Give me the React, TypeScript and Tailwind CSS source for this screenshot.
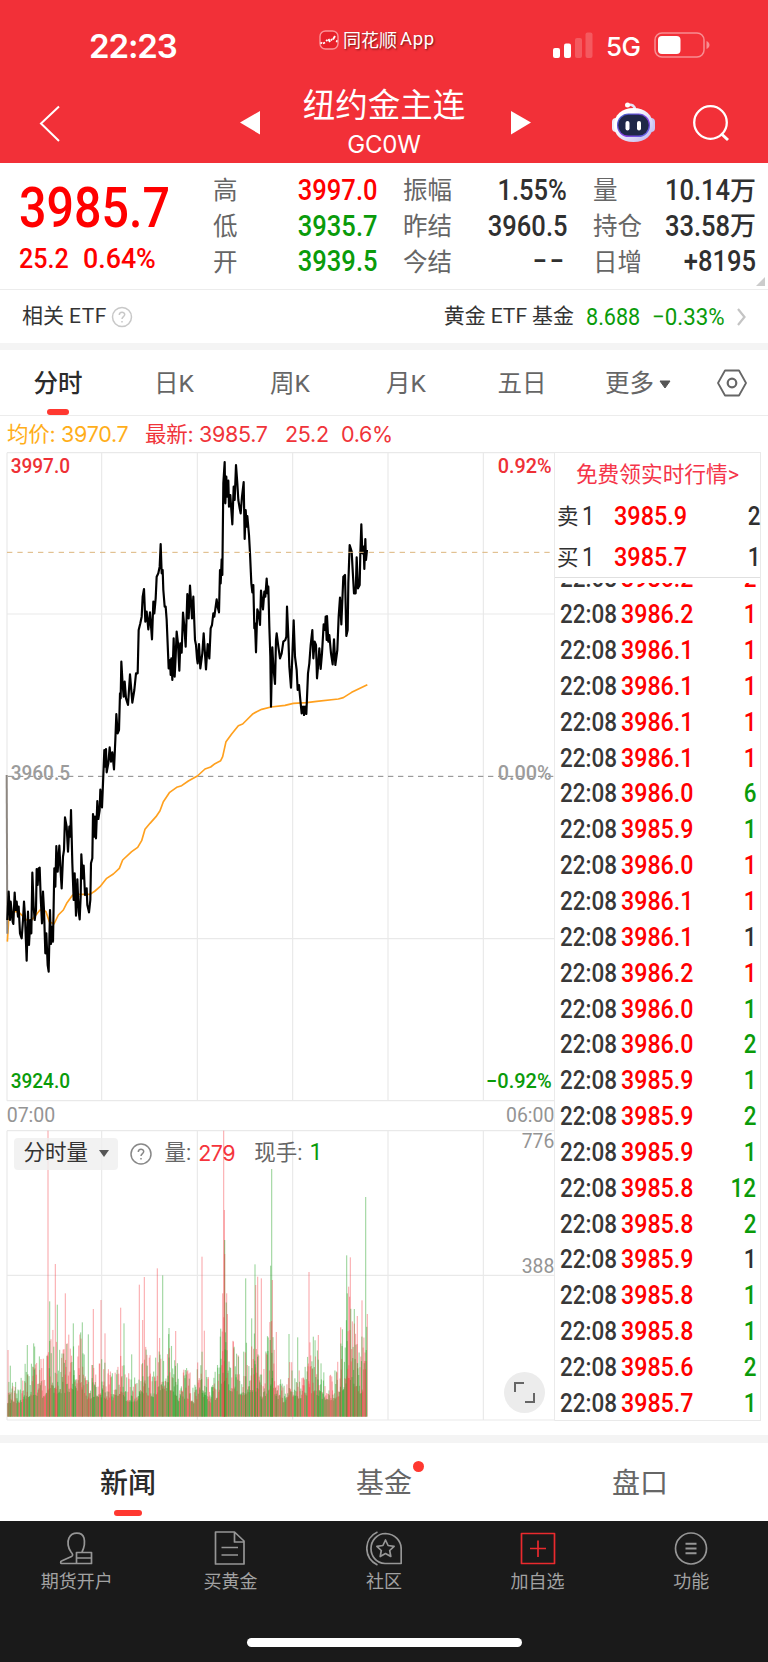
import React from 'react';
import { clsx } from 'clsx';

type Tone = 'up' | 'down' | 'flat';

const toneClass: Record<Tone, string> = {
  up: 'text-[#ff0000]',
  down: 'text-[#0a9b0a]',
  flat: 'text-[#303030]',
};

const quoteColumns: { label: string; value: string; unit?: string; tone: Tone }[][] = [
  [
    { label: '高', value: '3997.0', tone: 'up' },
    { label: '低', value: '3935.7', tone: 'down' },
    { label: '开', value: '3939.5', tone: 'down' },
  ],
  [
    { label: '振幅', value: '1.55%', tone: 'flat' },
    { label: '昨结', value: '3960.5', tone: 'flat' },
    { label: '今结', value: '−−', tone: 'flat' },
  ],
  [
    { label: '量', value: '10.14', unit: '万', tone: 'flat' },
    { label: '持仓', value: '33.58', unit: '万', tone: 'flat' },
    { label: '日增', value: '+8195', tone: 'flat' },
  ],
];
const columnClass = ['ml-[213px] w-[164px]', 'ml-[26px] w-[164px]', 'ml-[26px] w-[163px]'];

const ticks: [string, string, Tone][] = [
  ['3986.2', '2', 'up'],
  ['3986.2', '1', 'up'],
  ['3986.1', '1', 'up'],
  ['3986.1', '1', 'up'],
  ['3986.1', '1', 'up'],
  ['3986.1', '1', 'up'],
  ['3986.0', '6', 'down'],
  ['3985.9', '1', 'down'],
  ['3986.0', '1', 'up'],
  ['3986.1', '1', 'up'],
  ['3986.1', '1', 'flat'],
  ['3986.2', '1', 'up'],
  ['3986.0', '1', 'down'],
  ['3986.0', '2', 'down'],
  ['3985.9', '1', 'down'],
  ['3985.9', '2', 'down'],
  ['3985.9', '1', 'down'],
  ['3985.8', '12', 'down'],
  ['3985.8', '2', 'down'],
  ['3985.9', '1', 'flat'],
  ['3985.8', '1', 'down'],
  ['3985.8', '1', 'down'],
  ['3985.6', '2', 'down'],
  ['3985.7', '1', 'down'],
];

// Chart units: three per pixel, origin at the top left of the price pane.
const pricePoints =
  '22,1404 26,1319 30,1404 32,1349 38,1409 40,1416 44,1322 47,1374 50,1349 54,1394 56,1364 60,1444 65,1459 69,1404 72,1349 75,1394 80,1526 84,1379 87,1479 91,1404 94,1444 97,1262 101,1364 104,1404 108,1374 110,1251 113,1299 116,1249 119,1247 122,1334 126,1414 129,1319 132,1374 136,1504 139,1444 143,1539 146,1559 150,1374 153,1476 157,1424 159,1469 163,1249 166,1304 169,1182 173,1259 178,1181 181,1244 185,1309 189,1214 192,1194 195,1096 200,1124 204,1199 208,1124 211,1154 213,1074 217,1234 221,1344 224,1264 228,1391 232,1282 236,1379 239,1402 242,1334 244,1207 248,1279 251,1241 255,1329 260,1309 262,1359 267,1381 271,1344 273,1234 277,1219 279,1086 283,1154 285,1094 288,1159 292,1047 295,1101 299,1074 301,1013 306,1066 309,994 313,894 316,944 318,891 320,961 325,934 329,886 333,929 337,901 342,952 346,864 ' +
  '349,786 353,844 357,834 360,724 362,739 364,629 368,699 371,734 374,689 378,739 384,759 390,667 397,752 403,714 408,664 413,664 416,534 421,514 425,494 428,434 432,411 436,509 440,479 445,532 450,481 456,562 460,449 463,484 467,439 470,374 475,364 479,344 482,276 485,364 488,354 490,414 494,464 497,464 500,504 506,649 510,624 512,669 514,619 517,684 521,559 524,674 527,614 530,539 534,574 538,656 541,574 545,602 549,482 553,524 557,584 562,426 566,499 570,401 576,499 580,434 585,564 588,579 591,619 593,634 597,576 601,649 607,604 611,544 618,652 623,576 628,619 632,529 636,519 640,484 643,494 647,464 650,442 653,464 657,481 660,354 662,394 665,322 667,369 670,94 674,30 676,154 679,74 681,134 685,86 687,164 691,129 694,174 697,217 701,104 704,144 708,39 712,94 715,144 719,169 722,184 726,134 731,90 734,261 737,174 740,224 742,192 747,249 750,304 754,394 757,421 760,399 763,529 765,514 768,601 772,472 776,484 780,519 783,416 789,472 793,419 796,434 800,380 803,424 805,404 808,524 811,614 813,764 817,586 820,644 825,696 828,564 830,544 835,584 840,619 845,604 850,569 856,564 859,554 861,464 865,554 868,644 873,707 877,614 881,505 885,614 890,654 893,714 897,699 901,744 905,784 909,764 912,789 915,764 919,786 924,664 928,634 932,579 937,534 940,619 944,569 948,579 951,679 955,634 958,589 962,651 966,604 971,517 975,534 977,494 980,564 981,492 985,569 988,549 993,604 998,637 1002,562 1006,639 1012,594 1016,494 1020,437 1024,517 1030,374 1035,369 1039,552 1043,534 1045,394 1049,279 1055,299 1058,354 1062,424 1067,424 1070,316 1074,409 1079,399 1081,304 1084,217 1087,304 1091,284 1093,351 1096,261 1098,324 1101,294';

const averagePoints =
  '22,1469 26,1404 34,1379 50,1379 60,1384 70,1394 80,1404 95,1404 103,1394 112,1384 120,1374 130,1374 138,1379 148,1409 162,1416 175,1389 190,1374 200,1354 218,1329 240,1327 270,1327 285,1317 300,1304 320,1279 340,1266 358,1249 368,1224 395,1199 413,1186 425,1166 435,1132 450,1114 468,1094 480,1076 490,1049 508,1022 530,1006 545,1001 565,987 592,972 615,951 632,945 645,935 662,926 668,914 678,869 695,846 715,821 728,816 740,804 757,787 770,779 785,772 813,765 855,760 880,754 920,752 950,748 1015,741 1030,737 1055,721 1102,698';

// Typical bar height along the session, [x, height]
const volumeEnvelope: [number, number][] = [
  [22, 90], [60, 90], [80, 150], [100, 190], [130, 150], [150, 280], [165, 200], [210, 220], [245, 250],
  [260, 120], [290, 170], [320, 130], [340, 120], [360, 200], [380, 110], [410, 100], [430, 200], [460, 160],
  [485, 250], [510, 220], [530, 160], [540, 80], [560, 150], [580, 80], [600, 180], [620, 150], [635, 80],
  [650, 140], [665, 330], [675, 350], [690, 220], [710, 200], [730, 180], [750, 220], [770, 230], [790, 110],
  [813, 300], [830, 140], [845, 80], [870, 150], [900, 140], [940, 220], [970, 130], [1000, 120], [1020, 180],
  [1045, 360], [1060, 310], [1080, 200], [1102, 280],
];

const volumeSpikes: [number, number, 'r' | 'g'][] = [
  [24, 200, 'r'], [31, 153, 'g'], [82, 215, 'g'], [101, 220, 'g'], [144, 858, 'r'], [149, 346, 'g'],
  [166, 458, 'r'], [172, 336, 'g'], [196, 370, 'r'], [220, 280, 'g'], [247, 283, 'g'], [265, 247, 'g'],
  [280, 323, 'r'], [303, 350, 'r'], [315, 250, 'r'], [362, 327, 'r'], [372, 280, 'g'], [395, 187, 'g'],
  [418, 396, 'r'], [433, 419, 'r'], [428, 290, 'r'], [472, 445, 'r'], [488, 424, 'g'], [507, 266, 'g'],
  [527, 257, 'r'], [606, 480, 'r'], [613, 258, 'r'], [671, 858, 'r'], [673, 620, 'r'], [674, 530, 'g'],
  [674, 488, 'r'], [668, 370, 'r'], [680, 370, 'r'], [737, 415, 'g'], [755, 295, 'g'], [765, 457, 'g'],
  [767, 395, 'r'], [773, 420, 'r'], [784, 415, 'r'], [812, 453, 'g'], [815, 743, 'g'], [817, 410, 'r'],
  [829, 254, 'r'], [867, 248, 'g'], [893, 238, 'g'], [927, 434, 'r'], [940, 240, 'g'], [955, 245, 'r'],
  [1022, 268, 'r'], [1040, 484, 'g'], [1042, 370, 'g'], [1046, 390, 'r'], [1051, 478, 'r'], [1063, 323, 'g'],
  [1072, 302, 'r'], [1086, 349, 'r'], [1097, 659, 'g'], [1102, 308, 'r'],
];

const VOLUME_BASE = 2894;

function buildVolumeBars() {
  let seed = 20;
  const next = () => {
    seed = (seed * 16807) % 2147483647;
    return seed / 2147483647;
  };
  const bars = volumeSpikes.slice();
  let seg = 0;
  for (let x = 23; x <= 1101; x += 1.19) {
    while (seg < volumeEnvelope.length - 2 && x > volumeEnvelope[seg + 1][0]) seg++;
    const [x0, h0] = volumeEnvelope[seg];
    const [x1, h1] = volumeEnvelope[seg + 1];
    const top = h0 + ((h1 - h0) * (x - x0)) / (x1 - x0);
    const r = next();
    bars.push([x, 18 + top * (0.25 + 0.8 * r * r), next() < 0.46 ? 'r' : 'g']);
  }
  return bars;
}

const volumeBars = buildVolumeBars();

/* Narrow numerals used for quotes */
function Num({ children, className }: { children: React.ReactNode; className?: string }) {
  return <span className={clsx('inline-block scale-x-[0.88] whitespace-nowrap', className)}>{children}</span>;
}

function Header() {
  return (
    <header className="h-[163px] bg-[#f23038] text-white">
      <div className="flex h-[80px] items-start">
        <div className="ml-[89px] mt-[26px] w-[90px] font-[Inter] text-[33px] leading-10 font-semibold tracking-[-1.1px]">22:23</div>
        <div className="ml-[140px] mt-[26px] flex h-[28px] items-center">
          <svg width="20" height="20" viewBox="0 0 20 20" fill="none">
            <rect x="1" y="1" width="18" height="18" rx="5.500" fill="#e8202a" stroke="#fb9297" strokeWidth="1.400" />
            <path d="M1.500 12.500l1.500 1M4 13.500l2-1M7 10l1.500 1M9.500 9l1.500 3M12 10.500l1-1.500M14 9.500l2-3.500M17 11l1.500.5" stroke="#fff" strokeWidth="1.900" />
          </svg>
          <span className="ml-[4px] text-[18px] [text-shadow:1px_1px_2px_rgba(60,0,0,0.7)]">同花顺</span>
          <span className="ml-[3px] text-[18.500px] tracking-[0.7px] [text-shadow:1px_1px_2px_rgba(60,0,0,0.7)]">App</span>
        </div>
        <div className="ml-auto mr-[57px] mt-[32px] flex items-start">
          <svg width="40" height="26" viewBox="0 0 40 26" fill="#fff">
            <rect x="0" y="16" width="7" height="10" rx="2" />
            <rect x="11" y="11.500" width="7" height="14.500" rx="2" />
            <rect x="22" y="6" width="7" height="20" rx="2" opacity="0.2" />
            <rect x="32.500" y="0.500" width="7" height="25.500" rx="2" opacity="0.2" />
          </svg>
          <span className="ml-[13px] w-[36px] font-[Inter] text-[26px] leading-[30px] font-medium tracking-[-0.5px]">5G</span>
          <svg className="ml-[12px]" width="57" height="27" viewBox="0 0 57 27" fill="none">
            <rect x="1" y="1" width="49" height="24" rx="7" stroke="#fff" strokeOpacity="0.45" strokeWidth="1.500" />
            <rect x="4" y="4" width="22.500" height="18" rx="4" fill="#fff" />
            <path d="M52.500 9c4 1.500 4 6.500 0 8z" fill="#fff" fillOpacity="0.45" />
          </svg>
        </div>
      </div>
      <div className="flex h-[83px] items-start">
        <svg className="ml-[39px] mt-[25px]" width="22" height="38" viewBox="0 0 22 38" fill="none" stroke="#fff" strokeWidth="2">
          <path d="M20 1.500L2 18.500 20 36" />
        </svg>
        <svg className="ml-[179px] mt-[31px]" width="20" height="24" viewBox="0 0 20 24">
          <path d="M20 0v23.500L0 11.500z" fill="#fff" />
        </svg>
        <div className="w-[251px] pr-[3px] text-center">
          <h1 className="mt-[6px] text-[32.500px] leading-[40px] font-normal">纽约金主连</h1>
          <p className="mt-[3px] font-[Inter] text-[24px] leading-[32px] tracking-[-0.2px]">GC0W</p>
        </div>
        <svg className="mt-[31px]" width="20" height="24" viewBox="0 0 20 24">
          <path d="M0 0v23.500l20-12z" fill="#fff" />
        </svg>
        <svg className="ml-[80px] mt-[21px]" width="46" height="43" viewBox="0 0 46 43">
          <defs>
            <linearGradient id="shell" x1="0" y1="0" x2="1" y2="1">
              <stop offset="0.3" stopColor="#fff" />
              <stop offset="1" stopColor="#b9b2ee" />
            </linearGradient>
            <linearGradient id="visor" x1="0" y1="0" x2="1" y2="1">
              <stop offset="0" stopColor="#3e63c8" />
              <stop offset="0.600" stopColor="#8a3fe0" />
              <stop offset="1" stopColor="#4f6be0" />
            </linearGradient>
          </defs>
          <path d="M17 4c4-1 7 1 7 5" fill="none" stroke="#e6e4f6" strokeWidth="2.500" />
          <circle cx="16.500" cy="4" r="2.500" fill="#fff" />
          <rect x="1" y="17" width="8" height="14" rx="4" fill="#eceafa" />
          <rect x="36" y="17" width="8" height="14" rx="4" fill="#c9c5f2" />
          <path d="M22.500 7C34 7 42 14 42 24s-7 17-19.500 17S3 34 3 24 11 7 22.500 7z" fill="url(#shell)" />
          <rect x="6" y="12.500" width="33" height="23.500" rx="11.500" fill="url(#visor)" />
          <rect x="7.300" y="13.800" width="30.400" height="20.800" rx="10" fill="#1f2748" />
          <rect x="14.500" y="20" width="4" height="9.500" rx="2" fill="#fff" />
          <rect x="26" y="20" width="4" height="9.500" rx="2" fill="#fff" />
        </svg>
        <svg className="ml-[34px] mt-[24px]" width="40" height="40" viewBox="0 0 40 40" fill="none" stroke="#fff" strokeWidth="2.300">
          <circle cx="19.500" cy="18.500" r="16.300" />
          <path d="M30 29.500l7 6.500" strokeWidth="3" />
        </svg>
      </div>
    </header>
  );
}

function QuoteSummary() {
  return (
    <section className="relative flex h-[127px] border-b border-[#ececec] pt-[10px]">
      <div className="absolute left-[19px] top-[12px] font-medium text-[#ff0000]">
        <Num className="origin-left text-[55px] leading-[66px]">3985.7</Num>
        <div className="flex h-[36px] items-center text-[28.500px]">
          <Num className="w-[64px] origin-left">25.2</Num>
          <Num className="origin-left scale-x-[0.94]">0.64%</Num>
        </div>
      </div>
      {quoteColumns.map((column, c) => (
        <div key={c} className={columnClass[c]}>
          {column.map((row) => (
            <div key={row.label} className="flex h-[35.600px] items-center justify-between">
              <span className="pt-[2px] text-[24.500px] text-[#666]">{row.label}</span>
              <span className={clsx('flex items-center font-medium', toneClass[row.tone])}>
                <Num className={clsx('origin-right text-[29px]', row.value === '−−' && 'tracking-[3px]')}>{row.value}</Num>
                {row.unit && <span className="pt-px text-[26px]">{row.unit}</span>}
              </span>
            </div>
          ))}
        </div>
      ))}
      <svg className="absolute right-[3px] bottom-[3px]" width="9" height="9" viewBox="0 0 9 9">
        <path d="M9 0v9H0z" fill="#ccc" />
      </svg>
    </section>
  );
}

function RelatedEtf() {
  return (
    <section className="flex h-[60px] items-center border-b-[7px] border-[#f4f4f4] pl-[22px] text-[21px] text-[#333]">
      <span>相关</span>
      <span className="ml-[5px] tracking-[0.5px]">ETF</span>
      <svg className="ml-[4px]" width="22" height="22" viewBox="0 0 22 22" fill="none" stroke="#c8c8c8" strokeWidth="1.500">
        <circle cx="11" cy="11" r="9.500" />
        <path d="M8.300 9c0-3.600 5.400-3.600 5.400-.4 0 2-2.700 2-2.700 4.400M11 15v1.600" />
      </svg>
      <div className="ml-auto flex items-center">
        <span>黄金</span>
        <span className="mx-[5px]">ETF</span>
        <span>基金</span>
        <span className="ml-[12px] w-[66px] text-[24px] text-[#0a9b0a]">
          <span className="inline-block origin-left scale-x-[0.9]">8.688</span>
        </span>
        <span className="w-[72px] text-[24px] whitespace-nowrap text-[#0a9b0a]">
          <span className="inline-block origin-left scale-x-[0.93]">−0.33%</span>
        </span>
        <svg className="ml-[13px] mr-[22px]" width="9" height="18" viewBox="0 0 9 18" fill="none" stroke="#c4c4c4" strokeWidth="2.200">
          <path d="M1 1l6.500 8L1 17" />
        </svg>
      </div>
    </section>
  );
}

function PeriodTabs() {
  return (
    <nav className="flex h-[66px] border-b border-[#ececec] text-[24.500px] text-[#666]">
      <div className="relative flex w-[116px] items-center justify-center pt-[3px] font-medium text-[#2b2b2b]">
        <span>分时</span>
        <span className="absolute bottom-0 left-[47px] h-[6px] w-[22px] rounded-full bg-[#ff3830]" />
      </div>
      {['日K', '周K', '月K', '五日'].map((label) => (
        <div key={label} className="flex w-[116px] items-center justify-center pt-[3px]">
          {label}
        </div>
      ))}
      <div className="flex w-[116px] items-center justify-center pt-[3px]">
        更多
        <svg className="ml-[5px]" width="12" height="9" viewBox="0 0 12 9">
          <path d="M1 1h10L6 8z" fill="#555" stroke="#555" strokeLinejoin="round" />
        </svg>
      </div>
      <div className="flex flex-1 items-center justify-center">
        <svg width="32" height="28" viewBox="0 0 32 28" fill="none" stroke="#666" strokeWidth="1.800">
          <path d="M9 1.500h14L30 14l-7 12.500H9L2 14z" strokeLinejoin="round" />
          <circle cx="16" cy="14" r="4.300" strokeWidth="2.200" />
        </svg>
      </div>
    </nav>
  );
}

function Legend() {
  return (
    <div className="flex h-[36px] items-center pt-px pl-[7px] font-[Inter,'Noto_Sans_CJK_SC'] text-[21.500px] tracking-[-0.3px] whitespace-pre text-[#f0343a]">
      <span className="w-[138px] text-[#ffae1a]">均价: 3970.7</span>
      <span className="w-[140px]">最新: 3985.7</span>
      <span className="w-[56px]">25.2</span>
      <span>0.6%</span>
    </div>
  );
}

function Chart() {
  return (
    <div className="relative w-[555px]">
      <svg className="block" width="555" height="969" viewBox="0 0 1665 2907" fill="none">
        <g stroke="#e9e9e9" strokeWidth="3.500">
          <path d="M21 2h1644M21 486h1644M21 1460h1644M21 1946h1644M21 2036h1644M21 2470h1644M21 2904h1644" />
          <path d="M21 2v1944M305 2v1944M592 2v1944M878 2v1944M1164 2v1944M1450 2v1944M1664 2v2904" />
          <path d="M21 2036v868M305 2036v868M592 2036v868M878 2036v868M1164 2036v868M1450 2036v868" />
        </g>
        <path d="M24 973h1641" stroke="#868686" strokeWidth="3" strokeDasharray="16 14" />
        <g className="font-medium" fontFamily="Roboto" fontSize="61">
          <text x="32" y="62" textLength="178" lengthAdjust="spacingAndGlyphs" fill="#ee3036">3997.0</text>
          <text x="1493" y="62" textLength="162" lengthAdjust="spacingAndGlyphs" fill="#ee3036">0.92%</text>
          <text x="32" y="985" textLength="178" lengthAdjust="spacingAndGlyphs" fill="#9c9c9c">3960.5</text>
          <text x="1493" y="985" textLength="162" lengthAdjust="spacingAndGlyphs" fill="#9c9c9c">0.00%</text>
          <text x="32" y="1908" textLength="178" lengthAdjust="spacingAndGlyphs" fill="#0a9b0a">3924.0</text>
          <text x="1458" y="1908" textLength="197" lengthAdjust="spacingAndGlyphs" fill="#0a9b0a">−0.92%</text>
        </g>
        <g fontFamily="Roboto" fontSize="63" fill="#949494">
          <text x="20" y="2010" textLength="146" lengthAdjust="spacingAndGlyphs">07:00</text>
          <text x="1518" y="2010" textLength="145" lengthAdjust="spacingAndGlyphs">06:00</text>
          <text x="1565" y="2089" textLength="98" lengthAdjust="spacingAndGlyphs">776</text>
          <text x="1565" y="2464" textLength="98" lengthAdjust="spacingAndGlyphs">388</text>
        </g>
        <polyline points={averagePoints} stroke="#ffa01e" strokeWidth="5" strokeLinejoin="round" />
        <path d="M20 969L22 1445" stroke="#8d8781" strokeWidth="6" />
        <polyline points={pricePoints} stroke="#000" strokeWidth="6.500" strokeLinejoin="round" />
        <path d="M21 301h1640" stroke="#dcb57c" strokeWidth="3" strokeDasharray="16 15" />
        {volumeBars.map(([x, h, side], i) => (
          <rect
            key={i}
            x={x - 1.7}
            y={VOLUME_BASE - h}
            width="3.4"
            height={h}
            fill={side === 'r' ? '#f5343c' : '#129a12'}
            opacity="0.4"
          />
        ))}
      </svg>

      {/* Volume pane toolbar */}
      <div className="absolute left-[13.500px] top-[685.500px] flex h-[32px] items-center text-[21.500px] text-[#666]">
        <button className="flex h-[32px] w-[104px] items-center rounded bg-[#efefef]/80 pl-[10px] text-[#333]">
          分时量
          <svg className="ml-[10px]" width="12" height="9" viewBox="0 0 12 9">
            <path d="M1 1h10L6 8z" fill="#555" />
          </svg>
        </button>
        <svg className="ml-[12px]" width="22" height="22" viewBox="0 0 22 22" fill="none" stroke="#888" strokeWidth="1.500">
          <circle cx="11" cy="11" r="10" />
          <path d="M8.300 9c0-3.600 5.400-3.600 5.400-.4 0 2-2.700 2-2.700 4.400M11 15v1.600" />
        </svg>
        <span className="ml-[13px]">量:</span>
        <span className="ml-[7px] w-[38px] font-[Inter] text-[21.500px] tracking-[-0.5px] text-[#f5343c]">279</span>
        <span className="ml-[18px]">现手:</span>
        <span className="ml-[7px] text-[23px] text-[#0a9b0a]">1</span>
      </div>

      <button className="absolute left-[504px] top-[920px] flex size-[41px] items-center justify-center rounded-full bg-[#ececec]">
        <svg width="23" height="23" viewBox="0 0 23 23" fill="none" stroke="#666" strokeWidth="2">
          <path d="M2 11V2h9M12 21h9v-9" />
        </svg>
      </button>
    </div>
  );
}

function OrderPanel() {
  return (
    <div className="flex w-[206px] flex-col border border-l-0 border-[#e9e9e9]">
      <button className="h-[42px] shrink-0 pt-[2px] text-center text-[21.700px] whitespace-nowrap text-[#f5354a]">免费领实时行情&gt;</button>
      {[
        ['卖', '3985.9', '2'],
        ['买', '3985.7', '1'],
      ].map(([side, price, size]) => (
        <div key={side} className="flex h-[41px] shrink-0 items-center pt-[2px] text-[25.500px] leading-none font-medium text-[#303030]">
          <span className="ml-[2px] text-[21.500px] font-normal">{side}</span>
          <Num className="ml-[3px] w-[32px] origin-left font-normal">1</Num>
          <Num className="origin-left scale-x-[0.92] text-[#ff0000]">{price}</Num>
          <Num className="ml-auto origin-right">{size}</Num>
        </div>
      ))}
      <div className="h-[6px] shrink-0 border-t border-[#e0e0e0]" />
      <div className="flex h-[837px] flex-col justify-end overflow-hidden">
        {ticks.map(([price, size, tone], i) => (
          <div key={i} className="flex h-[35.850px] shrink-0 items-center pt-[3px] pl-[5px] text-[25.500px] leading-none font-medium">
            <Num className="w-[61px] origin-left scale-x-[0.87] text-[#383838]">22:08</Num>
            <Num className="origin-left scale-x-[0.91] text-[#ff0000]">{price}</Num>
            <Num className={clsx('mr-[4px] ml-auto origin-right', toneClass[tone])}>{size}</Num>
          </div>
        ))}
      </div>
    </div>
  );
}

function BottomTabs() {
  return (
    <nav className="flex h-[78px] text-[28px] text-[#666]">
      <div className="relative flex flex-1 items-center justify-center pt-[3px] font-medium text-[#2b2b2b]">
        新闻
        <span className="absolute bottom-[5px] left-[114px] h-[6px] w-[28px] rounded-full bg-[#ff3830]" />
      </div>
      <div className="relative flex flex-1 items-center justify-center pt-[3px]">
        基金
        <span className="absolute left-[156.500px] top-[18px] size-[11px] rounded-full bg-[#ff3830]" />
      </div>
      <div className="flex flex-1 items-center justify-center pt-[3px]">盘口</div>
    </nav>
  );
}

const navItems: { label: string; red?: boolean; icon: React.ReactNode }[] = [
  {
    label: '期货开户',
    icon: <path d="M17.500 32.500H2.500c-1 0-1.200-2 0-2.500l10-4.500c2-1 1-3-.5-4.500-3-4-4-10-2-14 3-6.500 13-6.500 15 0 1 4 .5 9-2 14M17.500 21.500h15v11h-15zM17.500 27h15" />,
  },
  {
    label: '买黄金',
    icon: <path d="M3.500 1h19l9.500 9v23H3.500zM22.500 1v10H32M9.500 16.500H26M9.500 24H26" />,
  },
  {
    label: '社区',
    icon: (
      <>
        <path d="M11.500 1C-2.500 7-3 27 11.500 34M19.500 2.500C29 3 35.200 10 35.200 18v14.500H19C10 32 5 25 5 17.500s6-15 14.500-15z" />
        <path d="M19.500 9l2.600 5.500 6 .8-4.400 4.200 1.100 6-5.300-3-5.300 3 1.100-6-4.400-4.200 6-.8z" />
      </>
    ),
  },
  {
    label: '加自选',
    red: true,
    icon: <path d="M1.500 2.500h33v30h-33zM18 9.500V26M10 17.500h16" />,
  },
  {
    label: '功能',
    icon: (
      <>
        <circle cx="18" cy="17.500" r="15.500" />
        <path d="M12.500 12.700h11M12.500 17.500h11M12.500 22.300h11" strokeWidth="2" />
      </>
    ),
  },
];

function NavBar() {
  return (
    <footer className="flex h-[141px] flex-col items-center bg-[#1a1a1a]">
      <div className="flex w-full pt-[10px]">
        {navItems.map((item) => (
          <div key={item.label} className="flex flex-1 flex-col items-center">
            <svg
              width="36"
              height="36"
              viewBox="0 0 36 36"
              fill="none"
              strokeWidth="1.700"
              strokeLinejoin="round"
              className={item.red ? 'stroke-[#ea2a2e]' : 'stroke-[#969696]'}
            >
              {item.icon}
            </svg>
            <span className="mt-[1px] text-[18px] leading-[27px] text-[#a2a2a2]">{item.label}</span>
          </div>
        ))}
      </div>
      <div className="mt-[43px] h-[9px] w-[275px] rounded-full bg-white" />
    </footer>
  );
}

export default function App() {
  return (
    <div className="h-[1662px] w-[768px] overflow-hidden bg-white font-[Roboto,'Noto_Sans_CJK_SC',sans-serif]">
      <Header />
      <QuoteSummary />
      <RelatedEtf />
      <PeriodTabs />
      <Legend />
      <div className="flex h-[969px]">
        <Chart />
        <OrderPanel />
      </div>
      <div className="mt-[14px] h-[8px] bg-[#f4f4f4]" />
      <BottomTabs />
      <NavBar />
    </div>
  );
}
